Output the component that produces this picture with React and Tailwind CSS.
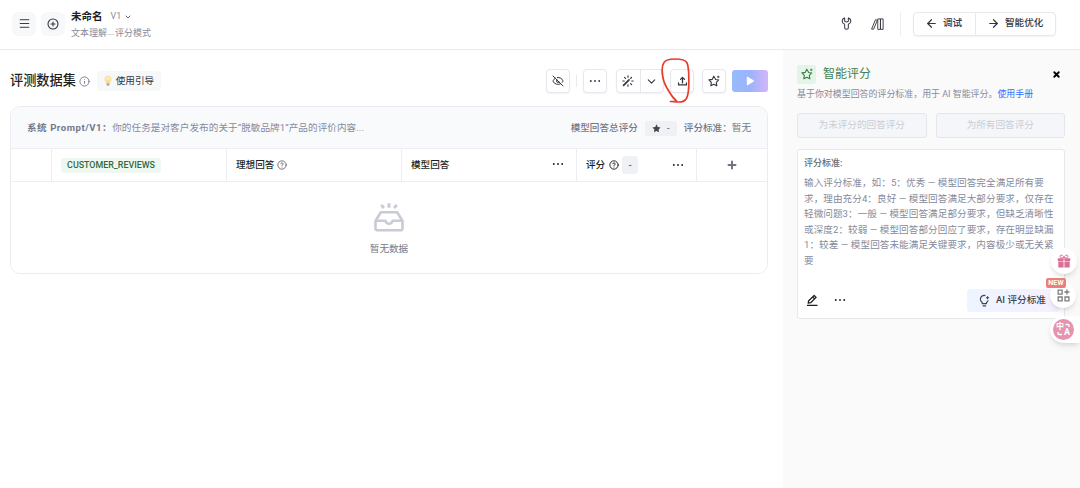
import { Menu, CirclePlus, ChevronDown, ArrowLeft, ArrowRight, EyeOff, Info, CircleHelp, Plus, X } from 'lucide-react';

const Dots = ({ className = '' }) => (
  <svg viewBox="0 0 12 4" className={`w-3 h-1 shrink-0 ${className}`} fill="currentColor">
    <circle cx="1.8" cy="2" r="0.95" />
    <circle cx="6" cy="2" r="0.95" />
    <circle cx="10.2" cy="2" r="0.95" />
  </svg>
);

const Wrench = () => (
  <svg viewBox="0 0 12 14" className="w-[11px] h-[13px]" fill="none" stroke="currentColor" strokeWidth="1.1" strokeLinejoin="round">
    <path d="M4 1C2.300 1.500 1.300 2.900 1.300 4.500c0 1.500.9 2.700 2.700 3.400V12c0 .8.8 1.300 2 1.300s2-.5 2-1.300V7.900c1.800-.7 2.700-1.900 2.700-3.400C10.700 2.900 9.700 1.500 8 1v3.500L6 5.500 4 4.500z" />
  </svg>
);

const Books = () => (
  <svg viewBox="0 0 14 13" className="w-[13px] h-[12px]" fill="none" stroke="currentColor" strokeWidth="1" strokeLinejoin="round">
    <path d="M.6 12.100 4.800 1.800l2 .7L2.800 12.100z" />
    <path d="M7.300 1H10.200v11.300H7.300zM10.200 1h2.900v11.300h-2.900z" />
  </svg>
);

const Wand = () => (
  <svg viewBox="0 0 14 14" className="w-3 h-3" fill="none" stroke="currentColor" strokeWidth="1.4" strokeLinecap="round">
    <path d="M1.800 12.200 8.200 5.800" strokeWidth="2" />
    <path d="M7 1v1.600M3 2.800l1.100 1.100M1 7h1.600M11.100 2.900 10 4M11.400 7H13M10 10l1.200 1.200M7 11.400V13" />
  </svg>
);

const Upload = () => (
  <svg viewBox="0 0 12 12" className="w-[11px] h-[11px]" fill="none" stroke="currentColor" strokeWidth="1.400" strokeLinecap="round" strokeLinejoin="round">
    <path d="M6 7.500V1.700M3.800 3.700 6 1.500l2.200 2.200M1.700 7.500v2.200h8.600V7.500" />
  </svg>
);

const StarSpark = ({ className = '' }) => (
  <svg viewBox="0 0 14 14" className={`w-3 h-3 ${className}`} fill="none" stroke="currentColor" strokeWidth="1.300" strokeLinejoin="round">
    <path d="M9 5.200 6.700 1.400 5 5.100l-3.900.6 2.800 2.800-.6 4.100 3.500-1.800 3.500 1.800-.6-4.100 2.800-2.700z" />
    <path d="M12 .8v2.800M10.600 2.200h2.800" strokeWidth="1" />
  </svg>
);

const Bulb = () => (
  <svg viewBox="0 0 10 14" className="w-[8px] h-[12px]">
    <path d="M5 .8a4 4 0 0 0-4 4c0 2.100 1.500 2.800 1.900 4.700h4.200C7.500 7.600 9 6.900 9 4.800a4 4 0 0 0-4-4z" fill="#fdebb0" stroke="#f3cf7c" strokeWidth=".6" />
    <path d="M4 9V5.500M6 9V5.500" stroke="#eebc5a" strokeWidth=".6" />
    <path d="M3.200 9.800h3.600v2.200L5.900 13H4.100l-.9-1z" fill="#aaa7a0" />
  </svg>
);

const Inbox = () => (
  <svg viewBox="0 0 32 30" className="w-8 h-[30px]" fill="none" stroke="#c9ccd6" strokeWidth="2.600" strokeLinejoin="round">
    <path d="M2.500 19 7.800 10.300h16.400l5.300 8.700v7.500a1.800 1.800 0 0 1-1.800 1.800H4.300a1.800 1.800 0 0 1-1.800-1.800z" />
    <path d="M2.500 18.800h10c.5 2 1.700 3 3.500 3s3-1 3.500-3h10" />
    <path d="M16 1.200v4.500M8.200 3l2.700 3M23.800 3l-2.700 3" strokeWidth="2.900" />
  </svg>
);

const Pencil = () => (
  <svg viewBox="0 0 12 12" className="w-3 h-3" fill="none" stroke="currentColor" strokeWidth="1.300" strokeLinejoin="round">
    <path d="m2.200 9.200.5-2.500 5.500-5.200 1.900 1.900-5.400 5.300zM6.700 3l1.900 1.900M1 11.300h10.500" />
  </svg>
);

const IdeaBulb = () => (
  <svg viewBox="0 0 12 14" className="w-[11px] h-[13px]" fill="none" stroke="currentColor" strokeWidth="1.300" strokeLinejoin="round">
    <path d="M7 1.700C6.600 1.600 6.300 1.500 5.900 1.500 3.400 1.500 1.500 3.300 1.500 5.600c0 1.700.9 2.600 2 3.500v1.300h4.700V9.100c.9-.7 1.600-1.300 1.900-2.200M4 12.800h3.700" />
    <path d="M9.300 2.300v3.400M7.600 4H11" />
  </svg>
);

const Gift = () => (
  <svg viewBox="0 0 14 14" className="w-[14px] h-[14px]">
    <path d="M.8 4.200h5.800v3H.8zM7.400 4.200h5.800v3H7.400zM1.300 7.700h5.300v5.900H1.300zM7.400 7.700h5.300v5.900H7.400z" fill="#d96f95" />
    <path d="M7 4C5.500 4 3 3.900 3 2.300 3 .3 6.300.8 7 4c.7-3.200 4-3.700 4-1.700C11 3.900 8.500 4 7 4z" fill="none" stroke="#d96f95" strokeWidth="1" />
  </svg>
);

const Widgets = () => (
  <svg viewBox="0 0 13 13" className="w-[13px] h-[13px]" fill="none" stroke="#7d7d7d" strokeWidth="1.300">
    <path d="M1.200 1.200h3.900v3.900H1.200zM1.200 8h3.900v3.900H1.200zM8 8h3.900v3.900H8zM9.900.5v5M7.400 3h5" />
  </svg>
);

const toolBtn = 'h-6 w-6 shrink-0 flex items-center justify-center rounded border border-[#e6e8ee] bg-white shadow-xs';

const criteria = [
  '输入评分标准，如：5：优秀 — 模型回答完全满足所有要',
  '求，理由充分4：良好 — 模型回答满足大部分要求，仅存在',
  '轻微问题3：一般 — 模型回答满足部分要求，但缺乏清晰性',
  '或深度2：较弱 — 模型回答部分回应了要求，存在明显缺漏',
  '1：较差 — 模型回答未能满足关键要求，内容极少或无关紧',
  '要',
];

function Header() {
  return (
    <header className="h-[50px] shrink-0 flex items-center border-b border-[#eaebee] bg-white pl-3 pr-6">
      <div className="w-6 h-6 mr-[5px] mt-[-2px] rounded-md bg-[#f7f8fa] flex items-center justify-center">
        <Menu size={13} strokeWidth={1.8} />
      </div>
      <div className="w-6 h-6 mt-[-2px] rounded-md bg-[#f7f8fa] flex items-center justify-center">
        <CirclePlus size={12} strokeWidth={2.200} />
      </div>
      <div className="ml-[6px] flex flex-col">
        <div className="h-[17px] flex items-center">
          <span className="text-[10.500px] font-bold text-[#1c1f23]">未命名</span>
          <span className="ml-2 text-[8.900px] text-[#868b9c]">V1</span>
          <ChevronDown size={8} strokeWidth={3} className="ml-[3px] text-[#5d6370]" />
        </div>
        <div className="h-[15px] pt-[2px] flex items-center text-[9px] text-[#868b9c]">
          文本理解<span className="mx-[1px] w-[6px] h-px bg-[#d5d7de]" />评分模式
        </div>
      </div>
      <div className="ml-auto flex items-center mt-[-2px]">
        <Wrench />
        <div className="ml-[19px]"><Books /></div>
        <div className="ml-[16px] w-px h-6 bg-[#eceef1]" />
        <div className="ml-3 h-6 w-[143px] flex rounded border border-[#e6e8ee] shadow-xs text-[9.600px] font-medium">
          <div className="w-[62px] border-r border-[#e6e8ee] flex items-center pl-[11px]">
            <ArrowLeft size={13} strokeWidth={2.200} className="mr-[5px]" />调试
          </div>
          <div className="flex-1 flex items-center pl-[11px]">
            <ArrowRight size={13} strokeWidth={2.200} className="mr-[5px]" />智能优化
          </div>
        </div>
      </div>
    </header>
  );
}

function Toolbar() {
  return (
    <div className="h-6 flex items-center">
      <h1 className="text-[13.200px] font-medium text-[#1c1f23]">评测数据集</h1>
      <Info size={11} className="ml-[3px] text-[#6f7483]" strokeWidth={1.900} />
      <div className="ml-[7px] h-5 w-[64px] rounded bg-[#f7f8fa] flex items-center justify-center gap-[4px] text-[9.600px]">
        <Bulb />使用引导
      </div>
      <div className="ml-auto flex items-center">
        <div className={toolBtn}><EyeOff size={12} strokeWidth={2} /></div>
        <div className="mx-[6px] w-px h-3 bg-[#e8eaee]" />
        <div className={toolBtn}><Dots /></div>
        <div className="ml-[9px] w-12 h-6 flex rounded border border-[#e6e8ee] shadow-xs">
          <div className="flex-1 flex items-center justify-center border-r border-[#e6e8ee]"><Wand /></div>
          <div className="flex-1 flex items-center justify-center"><ChevronDown size={13} strokeWidth={2} /></div>
        </div>
        <div className="relative ml-[6px]">
          <div className={toolBtn}><Upload /></div>
          <svg viewBox="0 0 34 50" className="absolute left-[-10px] top-[-13px] w-[34px] h-[50px]" fill="none" stroke="#e93d2b" strokeWidth="1.700" strokeLinecap="round" strokeLinejoin="round">
            <path d="M10.500 45.500C13 45.500 15.500 46 19 46c4 0 6-1 7.500-3.500C29 38 29 30 28.800 22c0-6 0-12-2-15.500C25 3.500 20 3 15 3c-4 0-9 .2-11 3.500C1.500 10 2 17 3 22c1 5.500 3.500 9.500 6 13.500 2 3.500 4.500 7 7.500 9.500" />
          </svg>
        </div>
        <div className={`${toolBtn} ml-2`}><StarSpark /></div>
        <div className="ml-[6px] w-9 h-[22px] rounded-[3px] bg-linear-to-r from-[#96bbfd] via-[#9cb3fb] to-[#d3b5f8] flex items-center justify-center">
          <svg viewBox="0 0 8 10" className="w-[9px] h-[10px]" fill="#fff" stroke="#fff" strokeLinejoin="round"><path d="M.8 1 7.300 5 .8 9z" /></svg>
        </div>
      </div>
    </div>
  );
}

function Dataset() {
  const cell = 'shrink-0 h-full flex items-center border-r border-[#eceef2] pl-[9px]';
  return (
    <section className="mt-[13px] w-[758px] h-[168px] flex flex-col rounded-[10px] border border-[#eaecf0] overflow-hidden">
      <div className="h-[42px] shrink-0 flex items-center bg-[#f9fafc] border-b border-[#eceef2] pl-4 pr-[16px] pt-[2px] text-[9.600px] text-[#868b9c]">
        <span className="whitespace-nowrap tracking-[.06px]"><b className="text-[#737889] tracking-[.52px]">系统 Prompt/V1：</b>你的任务是对客户发布的关于“脱敏品牌1”产品的评价内容...</span>
        <div className="ml-auto flex items-center text-[#737889]">
          <span className="font-medium">模型回答总评分</span>
          <div className="ml-[7px] mr-[7px] w-8 h-[15px] rounded-[3px] bg-[#f0f1f4] flex items-center justify-center gap-[6px] text-[#42464e]">
            <svg viewBox="0 0 10 10" className="w-[9px] h-[9px]" fill="currentColor"><path d="m5 .4 1.400 2.900 3.200.5-2.300 2.200.6 3.200L5 7.700 2.100 9.200l.6-3.200L.4 3.800l3.200-.5z" /></svg>
            <span className="text-[9px]">-</span>
          </div>
          <span><span className="font-medium">评分标准：</span>暂无</span>
        </div>
      </div>
      <div className="h-[33px] shrink-0 flex border-b border-[#eceef2] bg-white text-[9.600px] font-medium text-[#1c1f23]">
        <div className={`${cell} w-[41px]`} />
        <div className={`${cell} w-[175px]`}>
          <span className="h-[15px] w-[100px] pt-px rounded-[3px] bg-[#eef8f0] flex items-center justify-center text-[8.900px] text-[#32693c]">CUSTOMER_REVIEWS</span>
        </div>
        <div className={`${cell} w-[175px]`}>理想回答<CircleHelp size={10} strokeWidth={2} className="ml-[3px] text-[#555a65]" /></div>
        <div className={`${cell} w-[175px]`}>模型回答<Dots className="ml-auto mr-3 mb-[2px]" /></div>
        <div className={`${cell} w-[120px]`}>
          评分<CircleHelp size={10} strokeWidth={2.300} className="ml-[4px]" />
          <span className="ml-[3px] w-4 h-[18px] rounded-[3px] bg-[#f0f1f4] flex items-center justify-center text-[#5d6370]">-</span>
          <Dots className="ml-auto mr-3" />
        </div>
        <div className="flex-1 flex items-center justify-center text-[#6f7483]"><Plus size={12} strokeWidth={4} /></div>
      </div>
      <div className="flex-1 bg-white flex flex-col items-center pt-[20px]">
        <Inbox />
        <span className="mt-[10px] text-[9.600px] leading-[14px] text-[#737889]">暂无数据</span>
      </div>
    </section>
  );
}

function ScorePanel() {
  const disabledBtn = 'flex-1 h-[25px] rounded-[3px] border border-[#e3e6eb] bg-[#f5f6f9] flex items-center justify-center text-[9.600px] text-[#cacdd6]';
  return (
    <aside className="w-[297px] shrink-0 bg-[#fafafa] pl-[14px] pr-[15px] pt-[14px]">
      <div className="flex items-center h-5">
        <div className="w-[19px] h-[19px] rounded-[3px] bg-[#e3f5e6] flex items-center justify-center text-[#3c7d49]"><StarSpark /></div>
        <h2 className="ml-[7px] text-[12px] text-[#438150]">智能评分</h2>
        <X size={9} strokeWidth={5} className="ml-auto mr-1 text-black" />
      </div>
      <p className="mt-[3px] h-[14px] leading-[14px] text-[8.950px] text-[#868b9c] whitespace-nowrap">
        基于你对模型回答的评分标准，用于 AI 智能评分。<a className="text-[#3370ff]">使用手册</a>
      </p>
      <div className="mt-[12px] flex gap-[9px]">
        <div className={disabledBtn}>为未评分的回答评分</div>
        <div className={disabledBtn}>为所有回答评分</div>
      </div>
      <div className="mt-[11px] h-[170px] rounded-[3px] border border-[#e6e8ec] bg-white flex flex-col pl-[6px] text-[#868b9c]">
        <div className="mt-[6px] h-[15px] leading-[15px] text-[9px] font-medium text-[#666b78]">评分标准:</div>
        <div className="mt-[4px] text-[9.600px] leading-[15.600px] tracking-[.06px]">
          {criteria.map((line) => (
            <p key={line} className="whitespace-nowrap">{line}</p>
          ))}
        </div>
        <div className="mt-auto mb-[6px] h-6 flex items-center text-[#1c1f23]">
          <div className="ml-[2px]"><Pencil /></div>
          <Dots className="ml-[16px]" />
          <div className="ml-auto mr-[5px] h-[23px] w-[92px] rounded-[3px] bg-linear-to-r from-[#edf5ff] to-[#f7f0ff] flex items-center pl-3 text-[9.600px] font-medium text-[#42464e]">
            <IdeaBulb />
            <span className="ml-[6px] whitespace-nowrap">AI 评分标准</span>
          </div>
        </div>
      </div>
    </aside>
  );
}

function FloatingTools() {
  const round = 'absolute w-[26px] h-[26px] rounded-full bg-white shadow-md flex items-center justify-center';
  return (
    <div className="absolute right-0 top-[248px] w-[34px] h-[98px]">
      <div className={`${round} left-[5px] top-0`}><Gift /></div>
      <div className={`${round} left-[4px] top-[34px]`}><Widgets /></div>
      <div className="absolute left-0 top-[30px] w-5 h-[10px] rounded-[2px] bg-[#ec7f78] flex items-center justify-center text-[7px] tracking-[.2px] font-bold text-white">NEW</div>
      <div className="absolute right-0 top-[68px] w-[30px] h-[27px] rounded-l-full bg-white shadow-md flex items-center pl-[3px]">
        <div className="relative w-[21px] h-[21px] rounded-full bg-[#e593ae] text-white font-bold">
          <span className="absolute left-[3px] top-[4px] text-[8px] leading-[8px]">中</span>
          <span className="absolute left-[11px] top-[9px] text-[9px] leading-[9px]">A</span>
          <svg viewBox="0 0 21 21" className="absolute inset-0" fill="none" stroke="currentColor" strokeWidth="1.400">
            <path d="M12.500 5.500H15q1 0 1 1v1.500M5 13v1.500q0 1 1 1h3" />
          </svg>
        </div>
      </div>
    </div>
  );
}

export default function App() {
  return (
    <div className="relative w-[1080px] h-[488px] overflow-hidden bg-white flex flex-col font-[Roboto,'Noto_Sans_CJK_SC',sans-serif] text-[#33373f]">
      <Header />
      <div className="flex-1 flex">
        <main className="w-[783px] shrink-0 pl-[10px] pr-[15px] pt-[19px]">
          <Toolbar />
          <Dataset />
        </main>
        <ScorePanel />
      </div>
      <FloatingTools />
    </div>
  );
}
